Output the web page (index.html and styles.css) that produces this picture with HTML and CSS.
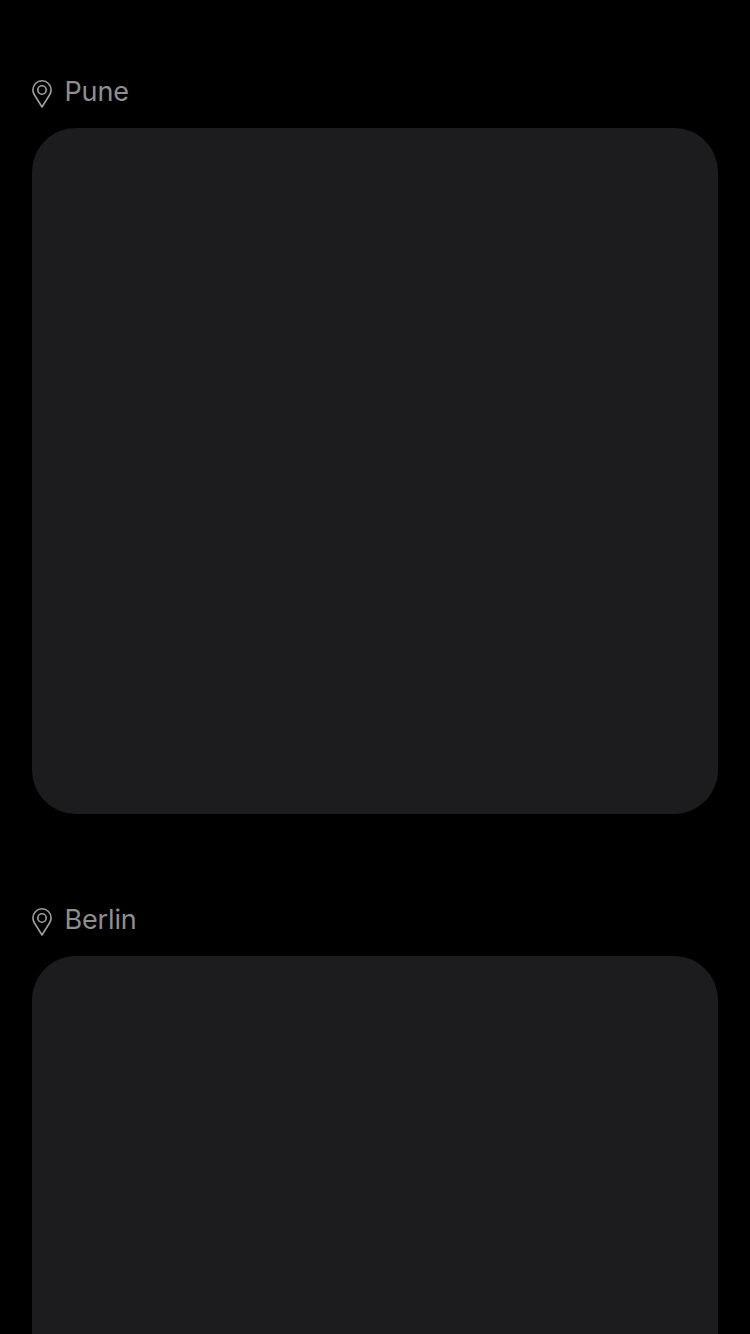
FILE: index.html
```html
<!DOCTYPE html>
<html lang="en">
<head>
<meta charset="utf-8">
<title>Locations</title>
<link rel="stylesheet" href="styles.css">
</head>
<body>
<main class="feed">
  <section class="place">
    <h2 class="place-title">
      <svg class="pin" viewBox="0 0 20 28" aria-hidden="true"><path d="M10 27L2.5 15C1.4 13.2 .9 11.6 .9 9.9a9.1 9.1 0 0 1 18.2 0C19.1 11.6 18.6 13.2 17.5 15Z"/><circle cx="10" cy="10" r="4.2"/></svg>
      <span class="place-name">Pune</span>
    </h2>
    <div class="card"></div>
  </section>
  <section class="place">
    <h2 class="place-title">
      <svg class="pin" viewBox="0 0 20 28" aria-hidden="true"><path d="M10 27L2.5 15C1.4 13.2 .9 11.6 .9 9.9a9.1 9.1 0 0 1 18.2 0C19.1 11.6 18.6 13.2 17.5 15Z"/><circle cx="10" cy="10" r="4.2"/></svg>
      <span class="place-name">Berlin</span>
    </h2>
    <div class="card"></div>
  </section>
</main>
</body>
</html>
```
FILE: styles.css
```css
body {
  margin: 0;
  background: #000;
  font-family: Inter, "Liberation Sans", sans-serif;
}

.feed {
  box-sizing: border-box;
  height: 1334px;
  padding: 74px 32px 0;
  display: flex;
  flex-direction: column;
  gap: 88px;
  overflow: hidden;
}

.place {
  flex: none;
}

.place-title {
  display: flex;
  align-items: flex-start;
  height: 54px;
  margin: 0;
  color: #8e8e93;
  font-size: 27px;
  font-weight: 400;
  letter-spacing: -0.15px;
  line-height: 36px;
}

.place-name {
  margin-left: 12.5px;
}

.pin {
  width: 20px;
  height: 28px;
  margin-top: 6px;
  fill: none;
  stroke: #a0a0a2;
  stroke-width: 1.6;
  stroke-linejoin: round;
}

.card {
  height: 686px;
  border-radius: 44px;
  background: #1c1c1e;
}
```
